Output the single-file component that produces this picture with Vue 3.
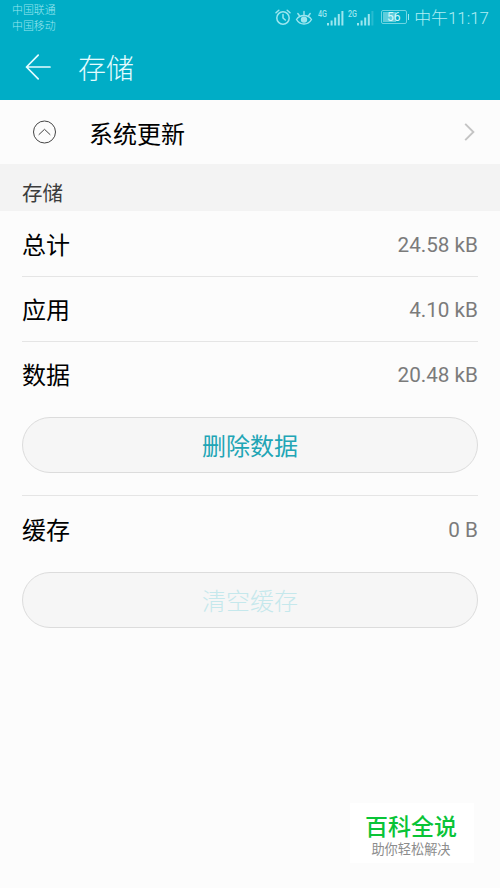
<script setup>
const rows = [
  { label: '总计', value: '24.58 kB' },
  { label: '应用', value: '4.10 kB' },
  { label: '数据', value: '20.48 kB' },
]
const battery = 56
</script>

<template>
  <div class="screen">
    <header class="top">
      <div class="status">
        <div class="carriers">
          <span>中国联通</span>
          <span>中国移动</span>
        </div>
        <div class="indicators">
          <svg class="alarm" width="16" height="17" viewBox="0 0 16 17" fill="none" stroke="currentColor" stroke-width="1.5" stroke-linecap="round">
            <circle cx="8" cy="9" r="6.200" />
            <path d="M8 5.500V9l2.300 2M1 3.800L3.800 1.300M15 3.800l-2.800-2.500" />
          </svg>
          <svg class="eye" width="18" height="17" viewBox="0 0 18 17" fill="none" stroke="currentColor" stroke-width="1.400" stroke-linecap="round">
            <path d="M1.500 10.500C3.200 7.800 5.800 6.500 9 6.500s5.800 1.300 7.500 4C14.800 13.500 12.200 15 9 15s-5.800-1.500-7.500-4.500z" />
            <circle cx="9" cy="10.600" r="2.500" fill="currentColor" />
            <path d="M9 5.500V2.500M4.300 6.500L2.800 4.500M13.700 6.500l1.500-2" />
          </svg>
          <div class="signal">
            <svg width="27" height="17" viewBox="0 0 27 17" fill="currentColor">
              <text x="0" y="7.500" textLength="9" lengthAdjust="spacingAndGlyphs">4G</text>
              <path d="M9 14h2v2.500H9zM12.600 11.500h2v5h-2zM16.200 8.500h2v8h-2zM19.800 5h2v11.500h-2zM23.400 2h2v14.500h-2z" />
            </svg>
          </div>
          <div class="signal second">
            <svg width="27" height="17" viewBox="0 0 27 17" fill="currentColor">
              <text x="0" y="7.500" textLength="9" lengthAdjust="spacingAndGlyphs">2G</text>
              <path d="M9 14h2v2.500H9zM12.600 11.500h2v5h-2zM16.200 8.500h2v8h-2zM19.800 5h2v11.500h-2z" />
              <path d="M23.400 2h2v14.500h-2z" opacity=".25" />
            </svg>
          </div>
          <div class="battery">
            <div class="cell">
              <div class="level" :style="{ width: battery + '%' }"></div>
              <span>{{ battery }}</span>
            </div>
            <i class="tip"></i>
          </div>
          <span class="clock">中午11:17</span>
        </div>
      </div>
      <div class="titlebar">
        <svg width="28" height="28" viewBox="0 0 28 28" fill="none" stroke="currentColor" stroke-width="1.700" stroke-linecap="round" stroke-linejoin="round">
          <path d="M14.200 2.200L2.500 14l11.700 11.800M2.500 14H26" />
        </svg>
        <h1>存储</h1>
      </div>
    </header>

    <div class="app-row">
      <svg width="24" height="24" viewBox="0 0 24 24" fill="none" stroke="#444">
        <circle cx="12.500" cy="12" r="11" />
        <path d="M6.700 14.800l5.800-5.500 5.800 5.500" />
      </svg>
      <span class="app-name">系统更新</span>
      <svg class="chevron" width="12" height="20" viewBox="0 0 12 20" fill="none" stroke="#c4c4c4" stroke-width="1.900">
        <path d="M1.200 1.800L9.400 10l-8.200 8.200" />
      </svg>
    </div>

    <h2 class="section">存储</h2>

    <main>
      <div v-for="row in rows" :key="row.label" class="row">
        <span class="label">{{ row.label }}</span>
        <span class="value">{{ row.value }}</span>
      </div>
      <button class="pill">删除数据</button>
      <div class="row cache">
        <span class="label">缓存</span>
        <span class="value">0 B</span>
      </div>
      <button class="pill" disabled>清空缓存</button>
    </main>

    <aside class="brand">
      <strong>百科全说</strong>
      <span>助你轻松解决</span>
    </aside>
  </div>
</template>

<style>
body {
  background: #fcfcfc;
}
</style>

<style scoped>
.screen {
  position: relative;
  box-sizing: border-box;
  width: 500px;
  height: 888px;
  overflow: hidden;
  background: #fcfcfc;
  color: #000;
  font-family: Roboto, "Noto Sans CJK SC", sans-serif;
}
.top {
  height: 100px;
  background: #00adc6;
  color: #e4fcff;
}
.status {
  display: flex;
  justify-content: space-between;
  height: 36px;
  padding: 0 11px 0 12px;
  color: #9ce6ef;
}
.carriers {
  display: flex;
  flex-direction: column;
  padding-top: 3px;
  font-size: 10.900px;
  font-weight: 300;
  line-height: 15.500px;
}
.indicators {
  display: flex;
  align-items: center;
  height: 34px;
}
.eye {
  margin-left: 4px;
}
.signal {
  display: flex;
  margin-left: 5px;
}
.signal.second {
  margin-left: 3px;
}
.signal text {
  font-size: 9px;
  font-weight: 500;
}
.battery {
  display: flex;
  align-items: center;
  margin-left: 6px;
}
.cell {
  position: relative;
  box-sizing: border-box;
  width: 26px;
  height: 14px;
  border: 1px solid #6dd5e2;
  border-radius: 2px;
  font-size: 12px;
  line-height: 12px;
  text-align: center;
  color: #d5f8fc;
}
.level {
  position: absolute;
  inset: 1px auto 1px 1px;
  background: #5fcddb;
}
.cell span {
  position: relative;
}
.tip {
  width: 1.500px;
  height: 6px;
  margin-left: 1px;
  background: #9ce6ef;
}
.clock {
  margin-left: 5px;
  font-size: 16.900px;
  font-weight: 300;
  line-height: 24px;
  padding-top: 1px;
  white-space: nowrap;
  color: #b0edf4;
}
.titlebar {
  display: flex;
  align-items: center;
  height: 62px;
  padding-left: 24px;
}
h1 {
  margin: 0 0 0 26px;
  padding-top: 5px;
  font-size: 28px;
  font-weight: 300;
  line-height: 40px;
}
.app-row {
  display: flex;
  align-items: center;
  height: 64px;
  padding: 0 24px 0 32px;
}
.app-name {
  margin-left: 33px;
  font-size: 24px;
}
.chevron {
  margin-left: auto;
}
.section {
  height: 47px;
  margin: 0;
  padding: 8px 22px 0;
  box-sizing: border-box;
  background: #f3f3f3;
  color: #3c3c3c;
  font-size: 20.500px;
  font-weight: 400;
  line-height: 44px;
}
main {
  padding: 0 22px;
}
.row {
  display: flex;
  align-items: center;
  justify-content: space-between;
  box-sizing: border-box;
  height: 65px;
  padding-top: 2px;
}
.row + .row {
  border-top: 1px solid #e5e5e5;
}
.label {
  padding-bottom: 3px;
  font-size: 24px;
}
.value {
  color: #7b7b7b;
  font-size: 20.700px;
}
.pill {
  display: block;
  box-sizing: border-box;
  width: 100%;
  height: 56px;
  margin: 11px 0 22px;
  padding: 0 0 1px;
  border: 1px solid #dcdcdc;
  border-radius: 28px;
  background: #f6f6f6;
  color: #21a5b5;
  font: 400 24px/36px "Noto Sans CJK SC", sans-serif;
}
.pill:disabled {
  color: #c5e8ec;
  font-weight: 300;
}
.row.cache {
  height: 66px;
  border-top: 1px solid #e5e5e5;
}
.brand {
  position: absolute;
  top: 803px;
  left: 350px;
  display: flex;
  flex-direction: column;
  align-items: center;
  width: 124px;
  height: 60px;
  padding: 10px 2px 0 0;
  box-sizing: border-box;
  background: #fff;
}
.brand strong {
  color: #09c437;
  font-size: 23px;
  font-weight: 500;
  line-height: 30px;
}
.brand span {
  color: #8c8c8c;
  font-size: 13.200px;
  line-height: 14px;
}
</style>
